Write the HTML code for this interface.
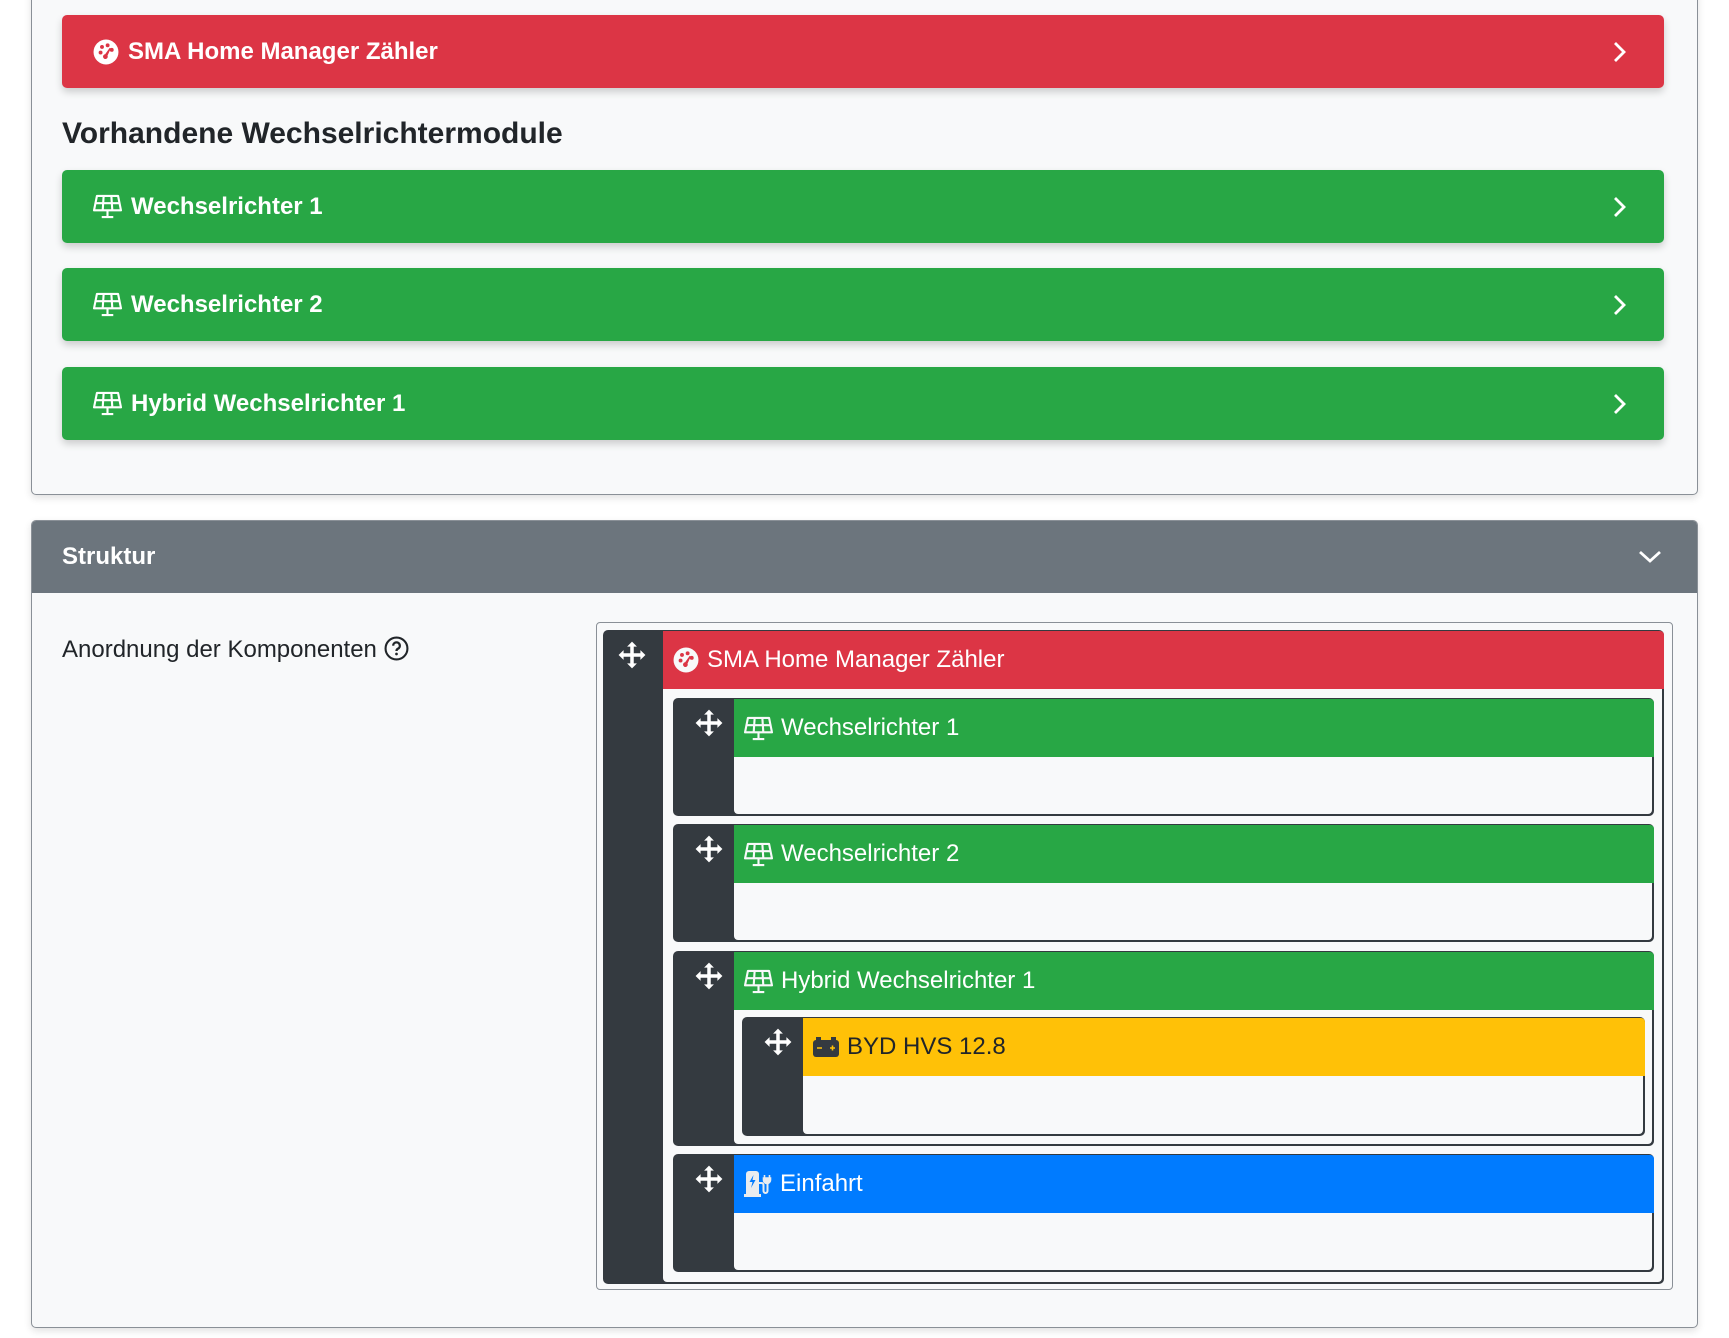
<!DOCTYPE html>
<html><head><meta charset="utf-8">
<style>
*{box-sizing:border-box;margin:0;padding:0}
body{width:1729px;height:1338px;background:#fff;font-family:"Liberation Sans",Arial,sans-serif;position:relative;overflow:hidden;color:#212529}
.abs{position:absolute}
.card{position:absolute;background:#f8f9fa;border:1px solid #8a9097;border-radius:5px;box-shadow:0 3px 8px rgba(0,0,0,.12)}
.bar{position:absolute;left:62px;width:1602px;height:73px;border-radius:5px;box-shadow:0 4px 8px rgba(0,0,0,.18);color:#fff;font-weight:bold;font-size:24px;display:flex;align-items:center;padding-left:31px}
.bar svg.ic{margin-right:9px}
.bar .chev{position:absolute;right:37px;top:26px}
.red{background:#dc3545}.green{background:#28a745}.blue{background:#007bff}.yellow{background:#ffc107}
.blk{position:absolute;background:#343a40;border-radius:5px}
.hd{position:absolute;top:1px;right:0;height:58px;display:flex;align-items:center;padding-left:10px;font-size:24px;color:#fff}
.hd svg{margin-right:8px}
.bd{position:absolute;right:2px;bottom:2px;background:#f8f9fa;border-radius:0 0 4px 4px}
.mv{position:absolute;width:28px;height:28px}
</style></head><body>

<svg width="0" height="0" style="position:absolute">
<defs>
<symbol id="move" viewBox="0 0 24 24"><path fill="#fff" d="M12 0.5l4.2 4.3h-2.7v5.7h5.7V7.8L23.5 12l-4.3 4.2v-2.7h-5.7v5.7h2.7L12 23.5l-4.2-4.3h2.7v-5.7H4.8v2.7L0.5 12l4.3-4.2v2.7h5.7V4.8H7.8z"/></symbol>
<symbol id="solar" viewBox="0 0 30 26"><g fill="none" stroke="currentColor" stroke-width="2.2" stroke-linejoin="round"><path d="M4 2h22l3 15H1z"/><path d="M1.8 9.5h26.4M11 2l-1 15M19 2l1 15"/><path d="M15 17v6M9 24h12"/></g></symbol>
<symbol id="tach" viewBox="0 0 24 24"><circle cx="12" cy="12" r="11.5" fill="currentColor"/><g fill="var(--bg)"><circle cx="7" cy="12.5" r="1.8"/><circle cx="8.3" cy="7.3" r="1.8"/><circle cx="13.5" cy="5.8" r="1.8"/><circle cx="17.3" cy="10" r="1.8"/><path d="M15.4 8.2l1 0.6-3 6.5a2.2 2.2 0 1 1-2.2-1.2z"/></g></symbol>
</defs></svg>

<!-- Card 1 -->
<div class="card" style="left:31px;top:-10px;width:1667px;height:505px"></div>
<div class="bar red" style="top:15px"><svg class="ic" width="26" height="26" style="--bg:#dc3545;color:#fff"><use href="#tach"/></svg>SMA Home Manager Zähler<svg class="chev" width="14" height="22" viewBox="0 0 14 22"><path d="M2 2l9 9-9 9" fill="none" stroke="#fff" stroke-width="2.8"/></svg></div>
<div class="abs" style="left:62px;top:117px;font-size:30px;font-weight:bold;color:#212529">Vorhandene Wechselrichtermodule</div>
<div class="bar green" style="top:170px"><svg class="ic" width="29" height="25" style="color:#fff"><use href="#solar"/></svg>Wechselrichter 1<svg class="chev" width="14" height="22" viewBox="0 0 14 22"><path d="M2 2l9 9-9 9" fill="none" stroke="#fff" stroke-width="2.8"/></svg></div>
<div class="bar green" style="top:268px"><svg class="ic" width="29" height="25" style="color:#fff"><use href="#solar"/></svg>Wechselrichter 2<svg class="chev" width="14" height="22" viewBox="0 0 14 22"><path d="M2 2l9 9-9 9" fill="none" stroke="#fff" stroke-width="2.8"/></svg></div>
<div class="bar green" style="top:367px"><svg class="ic" width="29" height="25" style="color:#fff"><use href="#solar"/></svg>Hybrid Wechselrichter 1<svg class="chev" width="14" height="22" viewBox="0 0 14 22"><path d="M2 2l9 9-9 9" fill="none" stroke="#fff" stroke-width="2.8"/></svg></div>

<!-- Card 2 -->
<div class="card" style="left:31px;top:520px;width:1667px;height:808px;overflow:hidden">
  <div style="height:72px;background:#6c757d;color:#fff;font-weight:bold;font-size:24px;padding-left:30px;line-height:72px">Struktur
  <svg style="position:absolute;right:35px;top:29px" width="24" height="14" viewBox="0 0 24 14"><path d="M2 2l10 9 10-9" fill="none" stroke="#fff" stroke-width="2.8"/></svg></div>
</div>
<div class="abs" style="left:62px;top:636px;font-size:24px;color:#212529">Anordnung der Komponenten <svg width="25" height="25" viewBox="0 0 24 24" style="vertical-align:-4px"><circle cx="12" cy="12" r="10.5" fill="none" stroke="#212529" stroke-width="2"/><path d="M8.8 9.3a3.2 3.2 0 1 1 4.6 2.9c-1 .5-1.4 1.1-1.4 2.2" fill="none" stroke="#212529" stroke-width="2.2"/><circle cx="12" cy="17.3" r="1.3" fill="#212529"/></svg></div>

<!-- outer box -->
<div class="abs" style="left:596px;top:622px;width:1077px;height:668px;border:1px solid #8a9097;border-radius:4px;background:#f8f9fa"></div>

<!-- root -->
<div class="blk" style="left:603px;top:630px;width:1061px;height:654px">
  <svg class="mv" style="left:15px;top:11px"><use href="#move"/></svg>
  <div class="hd red" style="left:60px;border-radius:0 4px 0 0"><svg width="26" height="26" style="--bg:#dc3545;color:#f8f9fa"><use href="#tach"/></svg>SMA Home Manager Zähler</div>
  <div class="bd" style="left:60px;top:59px"></div>
</div>

<!-- child blocks -->
<div class="blk" style="left:673px;top:698px;width:981px;height:118px">
  <svg class="mv" style="left:22px;top:11px"><use href="#move"/></svg>
  <div class="hd green" style="left:61px;border-radius:0 4px 0 0"><svg width="29" height="25" style="color:#f8f9fa"><use href="#solar"/></svg>Wechselrichter 1</div>
  <div class="bd" style="left:61px;top:59px"></div>
</div>
<div class="blk" style="left:673px;top:824px;width:981px;height:118px">
  <svg class="mv" style="left:22px;top:11px"><use href="#move"/></svg>
  <div class="hd green" style="left:61px;border-radius:0 4px 0 0"><svg width="29" height="25" style="color:#f8f9fa"><use href="#solar"/></svg>Wechselrichter 2</div>
  <div class="bd" style="left:61px;top:59px"></div>
</div>
<div class="blk" style="left:673px;top:951px;width:981px;height:195px">
  <svg class="mv" style="left:22px;top:11px"><use href="#move"/></svg>
  <div class="hd green" style="left:61px;border-radius:0 4px 0 0"><svg width="29" height="25" style="color:#f8f9fa"><use href="#solar"/></svg>Hybrid Wechselrichter 1</div>
  <div class="bd" style="left:61px;top:59px"></div>
</div>
<div class="blk" style="left:742px;top:1017px;width:903px;height:119px">
  <svg class="mv" style="left:22px;top:11px"><use href="#move"/></svg>
  <div class="hd yellow" style="left:61px;color:#212529;border-radius:0 4px 0 0"><svg width="26" height="20" viewBox="0 0 26 20"><rect x="0" y="3" width="26" height="17" rx="3" fill="#343a40"/><rect x="3" y="0" width="5" height="4" fill="#343a40"/><rect x="18" y="0" width="5" height="4" fill="#343a40"/><path d="M4 11h5M17 11h5M19.5 8.5v5" stroke="#ffc107" stroke-width="1.6"/></svg>BYD HVS 12.8</div>
  <div class="bd" style="left:61px;top:59px"></div>
</div>
<div class="blk" style="left:673px;top:1154px;width:981px;height:118px">
  <svg class="mv" style="left:22px;top:11px"><use href="#move"/></svg>
  <div class="hd blue" style="left:61px;border-radius:0 4px 0 0"><svg width="28" height="26" viewBox="0 0 28 26"><path d="M2 3a3 3 0 0 1 3-3h7a3 3 0 0 1 3 3v20H2z" fill="#e9ecef"/><rect x="0" y="23" width="17" height="3" fill="#e9ecef"/><path d="M9.5 4l-4 7h3l-1.5 6 4.5-8h-3z" fill="#007bff"/><path d="M15 12h2.5a2 2 0 0 1 2 2v6a2 2 0 0 0 4 0V10" fill="none" stroke="#e9ecef" stroke-width="2"/><path d="M20.5 4v3M25.5 4v3M19.5 7h7v2a3 3 0 0 1-7 0z" stroke="#e9ecef" stroke-width="1.6" fill="#e9ecef"/></svg>Einfahrt</div>
  <div class="bd" style="left:61px;top:59px"></div>
</div>

</body></html>
